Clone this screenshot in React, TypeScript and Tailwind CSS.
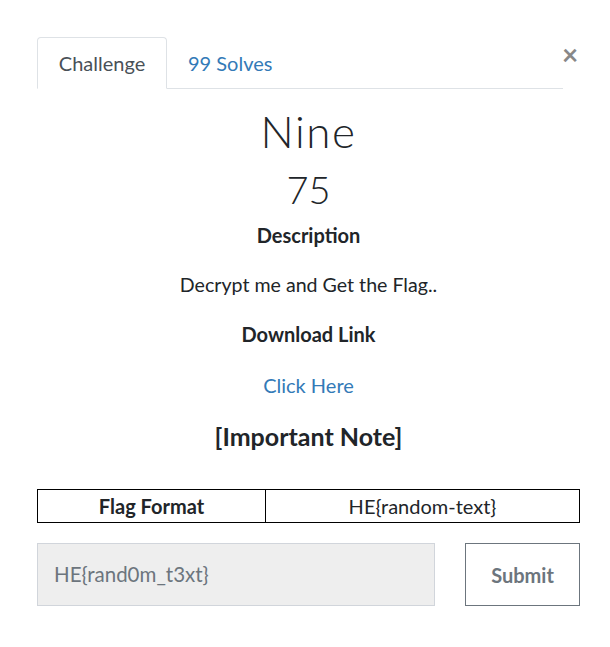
import React from "react";

const App: React.FC = () => {
  return (
    <div className="w-[610px] h-[647px] bg-white relative font-['Lato','Liberation_Sans',sans-serif] text-[#212529]">
      <button className="absolute left-[562px] top-[40px] text-[28px] leading-none font-bold text-[#888]">×</button>
      <div className="pl-[37px] pt-[37px] w-[580px]">
        <div className="flex w-[526px] border-b border-[#dee2e6] h-[52px]">
          <div className="w-[130px] flex items-center justify-center border border-[#dee2e6] border-b-white rounded-t-[4px] -mb-px bg-white text-[20px] text-[#495057]">
            Challenge
          </div>
          <div className="px-[21px] flex items-center text-[20px] text-[#337ab7]">99 Solves</div>
        </div>
        <div className="text-center">
          <h1 className="mt-[12px] text-[44px] leading-[60px] font-light tracking-[1.5px]">Nine</h1>
          <div className="mt-[5px] text-[38px] leading-[46px] font-light">75</div>
          <div className="mt-[11px] text-[20px] font-bold leading-[24px]">Description</div>
          <p className="mt-[26px] text-[19.6px] leading-[24px]">Decrypt me and Get the Flag..</p>
          <div className="mt-[25px] text-[20px] font-bold leading-[24px]">Download Link</div>
          <a className="block mt-[27px] text-[20px] leading-[24px] text-[#337ab7]">Click Here</a>
          <div className="mt-[25px] text-[25px] font-bold leading-[28px]">[Important Note]</div>
        </div>
        <table className="mt-[39px] w-[543px] border-collapse text-[20px]">
          <tbody>
            <tr className="h-[33px]">
              <td className="w-[228px] border border-black text-center font-bold leading-[24px]">Flag Format</td>
              <td className="border border-black text-center leading-[24px]">HE{"{"}random-text{"}"}</td>
            </tr>
          </tbody>
        </table>
        <div className="mt-[20px] flex justify-between w-[543px]">
          <div className="w-[398px] h-[63px] bg-[#eeeeee] border border-[#d1d5db] flex items-center pl-[16px] text-[20.5px] text-[#6c757d]">
            HE{"{"}rand0m_t3xt{"}"}
          </div>
          <button className="w-[115px] h-[63px] border border-[#6c757d] text-[20px] font-bold text-[#6c757d]">
            Submit
          </button>
        </div>
      </div>
    </div>
  );
};

export default App;
